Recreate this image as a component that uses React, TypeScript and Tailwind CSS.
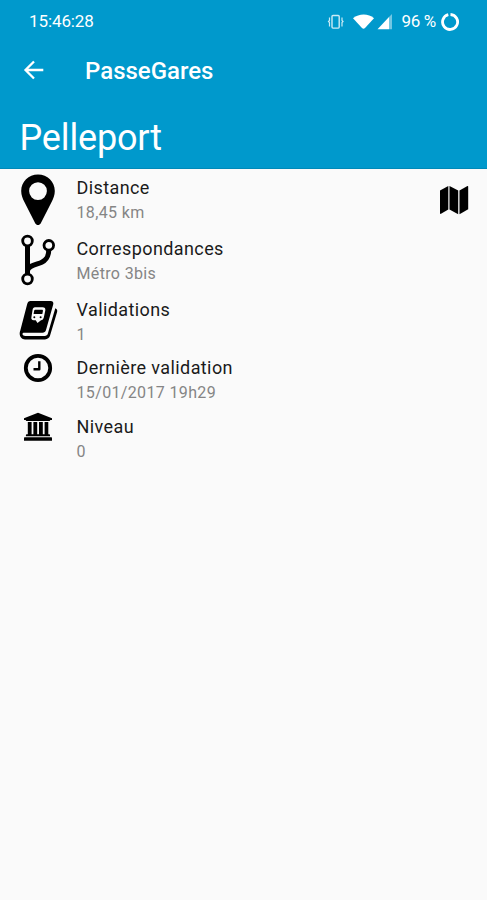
import type { ReactNode } from "react";

type Detail = {
  label: string,
  value: string,
  icon: ReactNode,
  rowClass: string,
  iconClass: string
}

function PinIcon() {
  return (
    <svg width="36" height="52" viewBox="0 0 36 52" fill="#000">
      <path fillRule="evenodd" d="M18 .6C8.500 .6 1.200 7.800 1.200 17c0 4.300 1.500 7.600 3.200 11l10.800 21.300c1.200 2.400 4.400 2.400 5.600 0L31.600 28c1.700-3.400 3.200-6.700 3.200-11C34.800 7.800 27.500 .6 18 .6zM18 8.200a8.900 8.900 0 1 1 0 17.800a8.900 8.900 0 0 1 0-17.800z" />
    </svg>
  )
}

function ForkIcon() {
  return (
    <svg width="36" height="52" viewBox="0 0 36 52" fill="none" stroke="#000">
      <path strokeWidth="5" d="M7.500 11v30M28.800 15c0 8-2.500 11-7 13.200S7.500 31.500 7.500 37" />
      <circle cx="7.500" cy="7" r="4.800" strokeWidth="2.800" fill="#fafafa" />
      <circle cx="28.800" cy="11.300" r="4.800" strokeWidth="2.800" fill="#fafafa" />
      <circle cx="7.500" cy="45" r="4.800" strokeWidth="2.800" fill="#fafafa" />
    </svg>
  )
}

function BookIcon() {
  return (
    <svg className="ml-px" width="40" height="40" viewBox="0 0 40 40">
      <path d="M11.500 1h20c2.500 0 3.300 1.600 2.700 3.500L27 30c-.5 1.800-1.800 2.700-3.500 2.700H5.300c-1.500 0-2 .6-1.800 1.500.3 1.200 1.300 1.700 2.800 1.700h19.500c1.500 0 2.600-.8 3-2.200L36.300 8.200c1.700.7 2.300 2 1.800 3.700L31 35.800c-.7 2.100-2.600 3.600-5 3.600H6c-3 0-5.200-2.400-5.300-5.300 0-1.300.1-2.100.6-3.500L8.200 4C8.800 2 9.700 1 11.500 1z" />
      <path fill="#fafafa" d="M16 7.200h7.500c2.200 0 3.200 1.200 2.800 3.200l-1.500 7.200c-.4 1.700-1.300 2.500-2.800 2.700L18.500 23l-1.800-2.700h-2c-1.900-.1-2.700-1.300-2.300-3l1.200-7.500c.3-1.700 1-2.600 2.400-2.600z" />
      <path d="M16.200 9.800h6.500c1 0 1.400.5 1.200 1.400l-.6 2.900h-8.700l.5-3.200c.1-.7.500-1.100 1.100-1.100z" />
      <circle cx="15.300" cy="17.300" r="1" />
      <circle cx="21.600" cy="17.300" r="1" />
    </svg>
  )
}

function ClockIcon() {
  return (
    <svg width="30" height="30" viewBox="0 0 30 30" fill="none" stroke="#000">
      <circle cx="15" cy="15" r="12.200" strokeWidth="3.800" />
      <path strokeWidth="2.400" strokeLinejoin="round" d="M16.300 8.300v8h-5.800" />
    </svg>
  )
}

function StationIcon() {
  return (
    <svg width="30" height="30" viewBox="0 0 30 30">
      <path d="M15 .8L29 6.200V8h-1.800c0 .6-.5 1-1 1H3.800c-.5 0-1-.4-1-1H1V6.200z" />
      <path d="M4.800 10h3.800v12.300h1.800V10h3.800v12.300h1.800V10h3.800v12.300h1.800V10h3.700v12.300h.7c.6 0 1 .4 1 1v.9H2.900v-.9c0-.6.5-1 1-1h.9z" />
      <path d="M2 25.300h26c.6 0 1 .4 1 1v2.500H1v-2.500c0-.6.400-1 1-1z" />
    </svg>
  )
}

function MapIcon() {
  return (
    <svg width="30" height="30" viewBox="0 0 30 30">
      <path d="M1 5.500L9.300 1v23.500L2 28.800c-.6.300-1 .1-1-.5z" />
      <path d="M10.500 1l8.700 4.500v23.700l-8.700-4.600z" />
      <path d="M20.500 5.500L28 1.200c.7-.4 1.200-.2 1.200.6v22.500l-8.700 4.900z" />
    </svg>
  )
}

function StatusIcons() {
  return (
    <svg width="68" height="18" viewBox="0 0 68 18" fill="#fff">
      <g fill="none" stroke="#fff" strokeOpacity=".8">
        <rect x="5" y="2.500" width="7.200" height="12.600" rx="1" strokeWidth="1.400" />
        <path d="M2.500 4.500v3l-1 1 1 1v4M15 4.500v3l1 1-1 1v4" strokeWidth="1.200" />
      </g>
      <path d="M26 5.300C32 .3 41.500 .3 47 5.300L38 15q-1.500 1.500-3 0z" />
      <path d="M50.500 16.200L62 4v12.200z" />
      <path opacity=".45" d="M62 4l3-3v15.200h-3z" />
    </svg>
  )
}

const details: Detail[] = [
  { label: "Distance", value: "18,45 km", icon: <PinIcon />, rowClass: "h-[61px]", iconClass: "pt-1" },
  { label: "Correspondances", value: "Métro 3bis", icon: <ForkIcon />, rowClass: "h-[61px]", iconClass: "pt-[3px]" },
  { label: "Validations", value: "1", icon: <BookIcon />, rowClass: "h-[58px]", iconClass: "pt-2" },
  { label: "Dernière validation", value: "15/01/2017 19h29", icon: <ClockIcon />, rowClass: "h-[59px]", iconClass: "pt-[3px]" },
  { label: "Niveau", value: "0", icon: <StationIcon />, rowClass: "h-[59px]", iconClass: "pt-[3px]" },
];

function DetailRow({ detail }: { detail: Detail }) {
  return (
    <div className={`flex items-start ${detail.rowClass}`}>
      <div className={`flex w-[76px] shrink-0 justify-center ${detail.iconClass}`}>{detail.icon}</div>
      <div className="flex flex-col pt-1.5 pl-[0.5px]">
        <span className="text-[18px] leading-6 tracking-[0.4px] text-[#1a1a1a]">{detail.label}</span>
        <span className="pt-px text-[16px] leading-6 tracking-[0.35px] text-[#858585]">{detail.value}</span>
      </div>
    </div>
  )
}

export default function App() {
  return (
    <div className="min-h-[900px] w-full bg-[#fafafa] font-['Roboto',sans-serif]">
      <header className="h-[169px] border-b border-[#0089b8] bg-[#0099cc] text-white">
        <div className="flex h-11 items-center justify-between pr-[27px] pl-[29px] text-[17px]">
          <span className="tracking-[-0.1px]">15:46:28</span>
          <div className="flex items-center">
            <StatusIcons />
            <span className="ml-1.5 text-[17px] tracking-[-0.3px]">96 %</span>
            <svg className="ml-1" width="20" height="20" viewBox="0 0 20 20" fill="none" stroke="#fff" strokeWidth="2.800">
              <path d="M10.500 2.500a7.500 7.500 0 1 1-2.200.2" />
            </svg>
          </div>
        </div>
        <div className="flex h-[54px] items-center pl-[22px]">
          <svg className="-mt-0.5" width="24" height="24" viewBox="0 0 24 24" fill="none" stroke="#fff" strokeWidth="2.300">
            <path d="M21.300 12H4M12 3.500L3.500 12l8.500 8.500" />
          </svg>
          <span className="ml-[39px] text-[24px] font-medium">PasseGares</span>
        </div>
        <h1 className="pl-[19.5px] text-[36px] leading-[80px] font-normal tracking-[-0.15px]">Pelleport</h1>
      </header>

      <main className="flex items-start justify-between pt-px">
        <div className="flex flex-col">
          {details.map(detail => (
            <DetailRow key={detail.label} detail={detail} />
          ))}
        </div>
        <button className="pt-[15px] pr-[18px]" aria-label="Carte">
          <MapIcon />
        </button>
      </main>
    </div>
  )
}
